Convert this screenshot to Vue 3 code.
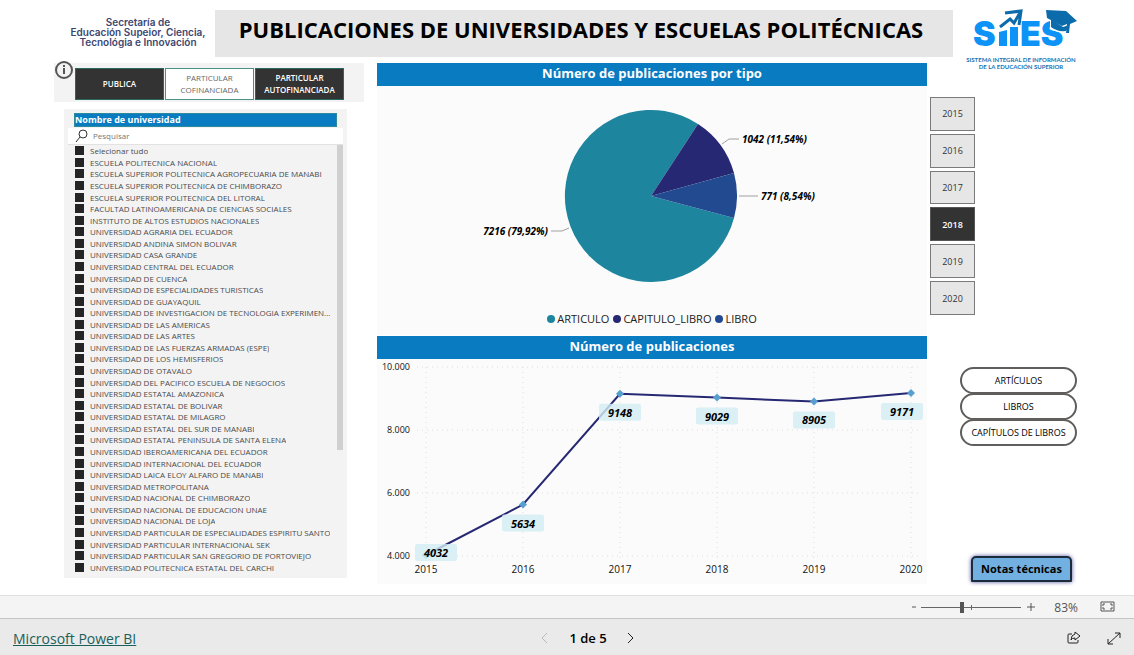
<script setup>
import { ref } from 'vue'

const sectors = ref([
  { label: 'PUBLICA', active: true },
  { label: 'PARTICULAR COFINANCIADA', active: false },
  { label: 'PARTICULAR AUTOFINANCIADA', active: true }
])

const universities = [
  'Selecionar tudo',
  'ESCUELA POLITECNICA NACIONAL',
  'ESCUELA SUPERIOR POLITECNICA AGROPECUARIA DE MANABI',
  'ESCUELA SUPERIOR POLITECNICA DE CHIMBORAZO',
  'ESCUELA SUPERIOR POLITECNICA DEL LITORAL',
  'FACULTAD LATINOAMERICANA DE CIENCIAS SOCIALES',
  'INSTITUTO DE ALTOS ESTUDIOS NACIONALES',
  'UNIVERSIDAD AGRARIA DEL ECUADOR',
  'UNIVERSIDAD ANDINA SIMON BOLIVAR',
  'UNIVERSIDAD CASA GRANDE',
  'UNIVERSIDAD CENTRAL DEL ECUADOR',
  'UNIVERSIDAD DE CUENCA',
  'UNIVERSIDAD DE ESPECIALIDADES TURISTICAS',
  'UNIVERSIDAD DE GUAYAQUIL',
  'UNIVERSIDAD DE INVESTIGACION DE TECNOLOGIA EXPERIMEN...',
  'UNIVERSIDAD DE LAS AMERICAS',
  'UNIVERSIDAD DE LAS ARTES',
  'UNIVERSIDAD DE LAS FUERZAS ARMADAS (ESPE)',
  'UNIVERSIDAD DE LOS HEMISFERIOS',
  'UNIVERSIDAD DE OTAVALO',
  'UNIVERSIDAD DEL PACIFICO ESCUELA DE NEGOCIOS',
  'UNIVERSIDAD ESTATAL AMAZONICA',
  'UNIVERSIDAD ESTATAL DE BOLIVAR',
  'UNIVERSIDAD ESTATAL DE MILAGRO',
  'UNIVERSIDAD ESTATAL DEL SUR DE MANABI',
  'UNIVERSIDAD ESTATAL PENINSULA DE SANTA ELENA',
  'UNIVERSIDAD IBEROAMERICANA DEL ECUADOR',
  'UNIVERSIDAD INTERNACIONAL DEL ECUADOR',
  'UNIVERSIDAD LAICA ELOY ALFARO DE MANABI',
  'UNIVERSIDAD METROPOLITANA',
  'UNIVERSIDAD NACIONAL DE CHIMBORAZO',
  'UNIVERSIDAD NACIONAL DE EDUCACION UNAE',
  'UNIVERSIDAD NACIONAL DE LOJA',
  'UNIVERSIDAD PARTICULAR DE ESPECIALIDADES ESPIRITU SANTO',
  'UNIVERSIDAD PARTICULAR INTERNACIONAL SEK',
  'UNIVERSIDAD PARTICULAR SAN GREGORIO DE PORTOVIEJO',
  'UNIVERSIDAD POLITECNICA ESTATAL DEL CARCHI'
]
const checked = ref(universities.map(() => true))

const years = [2015, 2016, 2017, 2018, 2019, 2020]
const year = ref(2018)
const zoom = ref(83)

const yOf = (v) => 556 - ((v - 4000) * 189) / 6000
const points = [4032, 5634, 9148, 9029, 8905, 9171].map((value, i) => ({
  value,
  year: 2015 + i,
  x: 426 + i * 97,
  y: yOf(value),
  lx: [436, 523, 620, 717, 814, 902][i],
  ly: value === 4032 ? 552 : yOf(value) + 18
}))
const line = points.map((p) => `${p.x},${p.y}`).join(' ')
const ticks = [
  { y: 367, label: '10.000' },
  { y: 430, label: '8.000' },
  { y: 493, label: '6.000' },
  { y: 556, label: '4.000' }
]
const legend = [
  { label: 'ARTICULO', kind: 'teal' },
  { label: 'CAPITULO_LIBRO', kind: 'navy' },
  { label: 'LIBRO', kind: 'blue' }
]
</script>

<template>
  <div class="app">
    <main class="report">
      <header class="top">
        <p class="agency">Secretaría de<br />Educación Supeior, Ciencia,<br />Tecnológia e Innovación</p>
        <h1>PUBLICACIONES DE UNIVERSIDADES Y ESCUELAS POLITÉCNICAS</h1>
        <svg class="logo" viewBox="953 0 181 76" role="img" aria-label="SIIES">
          <text class="mark" x="973" y="46">S</text>
          <path class="bar" d="M999 32l8-2v16h-8zM1010 27h8v19h-8z" />
          <text class="mark" x="1020" y="46">ES</text>
          <path class="arrow-line" d="M1000 27l10-8 4 4 7-12M1005 13l16-2-2 14" />
          <path class="cap-gap" d="M1050 16v12q8 6 18 4l3-13z" />
          <path class="cap" d="M1046 10l20 1 11 10-7 3-1 9-3 0 1-9-5 2-15-8z" />
          <path class="cap" d="M1051 19l12 8 6-2-3 6q-9 1-15-4z" />
          <text class="tag" x="1021" y="62">SISTEMA INTEGRAL DE INFORMACIÓN</text>
          <text class="tag" x="1021" y="69">DE LA EDUCACIÓN SUPERIOR</text>
        </svg>
      </header>

      <div class="body">
        <section class="left">
          <div class="sectors">
            <svg class="info" viewBox="0 0 20 20" aria-hidden="true">
              <circle cx="10" cy="10" r="8" />
              <path d="M10 5v2M10 8v6" />
            </svg>
            <button
              v-for="s in sectors"
              :key="s.label"
              type="button"
              :class="{ active: s.active }"
              :aria-pressed="s.active"
              @click="s.active = !s.active"
            >{{ s.label }}</button>
          </div>

          <div class="slicer">
            <h2>Nombre de universidad</h2>
            <label class="search">
              <svg viewBox="0 0 14 14" aria-hidden="true">
                <circle cx="8" cy="5" r="4" />
                <path d="M5 8l-4 5" />
              </svg>
              <input type="text" placeholder="Pesquisar" aria-label="Pesquisar" />
            </label>
            <ul>
              <li v-for="(u, i) in universities" :key="u">
                <label><input v-model="checked[i]" type="checkbox" /><span>{{ u }}</span></label>
              </li>
            </ul>
            <div class="scroll"></div>
          </div>
        </section>

        <section class="charts">
          <article class="card">
            <h2>Número de publicaciones por tipo</h2>
            <svg class="plot" viewBox="377 86 550 222" role="img" aria-label="Publicaciones por tipo">
              <path class="teal" d="M651 196L734 218A86 86 0 1 1 698 124Z" />
              <path class="navy" d="M651 196L698 124A86 86 0 0 1 734 173Z" />
              <path class="blue" d="M651 196L734 173A86 86 0 0 1 734 218Z" />
              <path class="lead" d="M722 144l7-5h10M739 196h19M551 231h11l7-3" />
              <text class="val" x="742" y="143">1042 (11,54%)</text>
              <text class="val" x="761" y="200">771 (8,54%)</text>
              <text class="val end" x="548" y="235">7216 (79,92%)</text>
            </svg>
            <div class="legend">
              <span v-for="l in legend" :key="l.label"><i :class="l.kind"></i>{{ l.label }}</span>
            </div>
          </article>

          <article class="card">
            <h2>Número de publicaciones</h2>
            <svg class="plot" viewBox="377 359 550 225" role="img" aria-label="Publicaciones por año">
              <g v-for="t in ticks" :key="t.label">
                <path class="grid" :d="`M417 ${t.y}H920`" />
                <text class="axis tick end" x="410" :y="t.y + 3">{{ t.label }}</text>
              </g>
              <g v-for="p in points" :key="p.year">
                <path class="grid" :d="`M${p.x} 367V559`" />
                <text class="axis mid" :x="p.x" y="573">{{ p.year }}</text>
              </g>
              <polyline class="line" :points="line" />
              <g v-for="p in points" :key="p.value">
                <path class="dot" :d="`M${p.x} ${p.y - 4}l4 4l-4 4l-4-4z`" />
                <rect class="tip" :x="p.lx - 21" :y="p.ly - 8" width="42" height="17" rx="2" />
                <text class="val big mid" :x="p.lx" :y="p.ly + 5">{{ p.value }}</text>
              </g>
            </svg>
          </article>
        </section>

        <aside class="right">
          <div class="years">
            <button
              v-for="y in years"
              :key="y"
              type="button"
              :class="{ active: y === year }"
              :aria-pressed="y === year"
              @click="year = y"
            >{{ y }}</button>
          </div>
          <nav class="pills">
            <button type="button">ARTÍCULOS</button>
            <button type="button">LIBROS</button>
            <button type="button">CAPÍTULOS DE LIBROS</button>
          </nav>
          <button type="button" class="notes">Notas técnicas</button>
        </aside>
      </div>
    </main>

    <div class="zoombar">
      <button type="button" aria-label="Reducir"><svg viewBox="0 0 10 10"><path d="M3 5h4" /></svg></button>
      <div class="range">
        <input v-model="zoom" type="range" min="10" max="190" aria-label="Zoom" />
        <i></i>
      </div>
      <button type="button" aria-label="Ampliar"><svg viewBox="0 0 10 10"><path d="M1 5h8M5 1v8" /></svg></button>
      <output>{{ zoom }}%</output>
      <button type="button" class="fit" aria-label="Ajustar a la página">
        <svg viewBox="0 0 16 12"><path d="M1 1h13v9H1zM3 5V3h2M10 3h2v2M12 6v2h-2M5 8H3V6" /></svg>
      </button>
    </div>

    <footer class="foot">
      <a href="#">Microsoft Power BI</a>
      <div class="pager">
        <button type="button" disabled aria-label="Anterior"><svg viewBox="0 0 8 12"><path d="M6 1L1 6l5 5" /></svg></button>
        <span>1 de 5</span>
        <button type="button" aria-label="Siguiente"><svg viewBox="0 0 8 12"><path d="M1 1l5 5-5 5" /></svg></button>
      </div>
      <div class="actions">
        <button type="button" aria-label="Compartir">
          <svg viewBox="0 0 14 14"><path d="M5 3H2Q1 3 1 4v7q0 1 1 1h8q1 0 1-1V9M8 1l5 4-5 4V7Q5 7 4 9q0-5 4-6z" /></svg>
        </button>
        <button type="button" aria-label="Pantalla completa">
          <svg viewBox="0 0 14 14"><path d="M1 13L13 2M8 2h5v5M1 8v5h5" /></svg>
        </button>
      </div>
    </footer>
  </div>
</template>

<style>
body { margin: 0; background: #fff; }
</style>

<style scoped>
* { box-sizing: border-box; }
.app {
  display: flex;
  flex-direction: column;
  min-height: 100vh;
  font-family: "Open Sans", "Noto Sans", sans-serif;
  color: #000;
}
button { font: inherit; color: inherit; padding: 0; margin: 0; cursor: pointer; }
h1, h2, p, ul { margin: 0; padding: 0; }
svg { display: block; }

.report { flex: 1; display: flex; flex-direction: column; padding: 10px 0 11px 54px; }
.top { display: flex; height: 47px; }
.agency {
  width: 161px;
  padding: 7px 0 0 7px;
  font: 600 10px/10px Inter, sans-serif;
  color: #3c4670;
  text-align: center;
  white-space: nowrap;
}
h1 {
  flex: 1;
  background: #e6e6e6;
  padding-right: 6px;
  font-size: 22px;
  line-height: 38px;
  font-weight: 700;
  text-align: center;
  white-space: nowrap;
}
.logo { width: 181px; height: 76px; margin-top: -10px; }
.mark { font: 900 34px Inter, sans-serif; fill: #0d92f6; }
.bar { fill: #0d92f6; }
.arrow-line { fill: none; stroke: #0b6bab; stroke-width: 3; }
.cap { fill: #0b6bab; }
.cap-gap { fill: #fff; }
.tag { font: 700 6px Lato, sans-serif; fill: #1574b5; text-anchor: middle; }

.body { flex: 1; display: grid; grid-template-columns: 310px 1fr 207px; padding-top: 6px; }
.left { display: flex; flex-direction: column; }
.sectors {
  position: relative;
  display: grid;
  grid-template-columns: repeat(3, 1fr);
  gap: 1px;
  height: 39px;
  padding: 5px 20px 2px 21px;
  background: #f3f3f3;
}
.sectors button {
  background: #fff;
  border: 1px solid #4a9186;
  color: #666;
  font-size: 8px;
  line-height: 12px;
  font-weight: 400;
}
.sectors button.active { background: #333; border-color: #28685f; color: #fff; font-weight: 600; }
.info { position: absolute; left: 0; top: -3px; width: 20px; height: 20px; fill: none; stroke: #555; stroke-width: 2; }

.slicer {
  position: relative;
  flex: 1;
  display: flex;
  flex-direction: column;
  margin: 7px 17px 6px 10px;
  padding: 4px 0 5px;
  background: #f3f3f3;
}
.slicer h2 {
  margin: 0 10px 1px;
  height: 14px;
  background: #087bc1;
  border: 1px solid #2c8a9c;
  color: #fff;
  font-size: 9px;
  line-height: 12px;
}
.search { display: flex; align-items: center; gap: 4px; height: 17px; margin: 0 4px; padding-left: 7px; background: #fff; border-bottom: 1px solid #e2e2e2; }
.search svg { width: 14px; height: 14px; fill: none; stroke: #333; }
.search input { flex: 1; min-width: 0; border: 0; padding: 0; background: none; font: 8px/12px "Open Sans", sans-serif; outline: none; }
.search input::placeholder { color: #777; opacity: 1; }
.slicer ul { flex: 1; display: grid; grid-template-columns: minmax(0, 1fr); grid-auto-rows: 1fr; list-style: none; padding: 0 6px 0 11px; }
.slicer li { min-height: 0; min-width: 0; display: flex; align-items: center; }
.slicer li label { display: flex; align-items: center; gap: 6px; min-width: 0; width: 100%; height: 11px; }
.slicer li input { appearance: none; flex: none; width: 9px; height: 9px; margin: 0; border: 1px solid #252525; background: #fff; }
.slicer li input:checked { background: #252525; }
.slicer li span { font-size: 8px; line-height: 11px; color: #4a4a4a; white-space: nowrap; overflow: hidden; text-overflow: ellipsis; }
.scroll { position: absolute; right: 4px; top: 36px; width: 6px; height: 65%; background: #d0d0d0; }

.charts { margin: 0 0 0 13px; display: flex; flex-direction: column; gap: 1px; }
.card { background: #fbfbfb; }
.card h2 { height: 23px; background: #087bc1; color: #fff; font-size: 13px; line-height: 21px; text-align: center; }
.plot { width: 100%; }
.teal { fill: #1d859d; background: #1d859d; }
.navy { fill: #262873; background: #262873; }
.blue { fill: #224a90; background: #224a90; }
.lead { fill: none; stroke: #a0a0a0; }
.val { font: italic 700 10px "Open Sans", sans-serif; fill: #000; }
.val.big { font-size: 11px; }
.end { text-anchor: end; }
.mid { text-anchor: middle; }
.legend { display: flex; justify-content: center; align-items: flex-start; gap: 4px; height: 27px; padding-top: 3px; font-size: 11px; line-height: 15px; color: #222; }
.legend span { display: flex; align-items: center; gap: 2px; }
.legend i { width: 8px; height: 8px; border-radius: 50%; }
.grid { fill: none; stroke: #dedede; stroke-dasharray: 1 4; }
.axis { font: 10px "Open Sans", sans-serif; fill: #111; }
.axis.tick { font-size: 9px; }
.line { fill: none; stroke: #262873; stroke-width: 2; }
.dot { fill: #579fd0; }
.tip { fill: #d3eef4; fill-opacity: .8; }

.right { display: flex; flex-direction: column; align-items: flex-start; padding: 34px 0 2px 3px; }
.years { display: grid; grid-auto-rows: 1fr; gap: 3px; width: 45px; height: 218px; }
.years button { background: #e6e6e6; border: 1px solid #7a7a7a; font-size: 9px; color: #333; }
.years button.active { background: #333; border-color: #555; color: #fff; font-weight: 600; }
.pills { display: flex; flex-direction: column; width: 117px; margin: 52px 0 0 30px; }
.pills button { height: 27px; margin-bottom: -1px; border: 2px solid #605e5c; border-radius: 14px; background: #fff; font-size: 9px; line-height: 20px; white-space: nowrap; }
.notes {
  width: 101px;
  height: 26px;
  margin: auto 0 0 41px;
  border: 2px solid #1c2b3c;
  border-radius: 5px 5px 1px 1px;
  background: #72b0e2;
  box-shadow: 0 0 4px #5050a0;
  font-size: 11px;
  line-height: 20px;
  font-weight: 700;
  white-space: nowrap;
}

.zoombar { display: flex; align-items: center; height: 23px; padding-right: 18px; justify-content: flex-end; background: #f4f4f4; border-top: 1px solid #e0e0e0; color: #555; font-size: 12px; }
.zoombar button, .foot button { background: none; border: 0; }
.zoombar svg { width: 10px; height: 10px; fill: none; stroke: #555; }
.zoombar .fit { margin-left: 22px; }
.zoombar .fit svg { width: 16px; height: 12px; }
.zoombar output { margin-left: 18px; }
.range { position: relative; width: 100px; height: 12px; margin: 0 5px 0 2px; }
.range input { appearance: none; display: block; width: 100%; height: 12px; margin: 0; background: linear-gradient(#666, #666) center / 100% 1px no-repeat; }
.range input::-webkit-slider-thumb { appearance: none; width: 4px; height: 11px; background: #555; }
.range i { position: absolute; left: 50px; top: 4px; width: 1px; height: 5px; background: #666; }

.foot { display: grid; grid-template-columns: 1fr auto 1fr; align-items: center; height: 37px; padding: 2px 13px 0; background: #eaeaea; border-top: 1px solid #c6c6c6; font-size: 13px; }
.foot a { color: #19605a; font-size: 14px; }
.foot svg { fill: none; stroke: #222; }
.pager { display: flex; align-items: center; gap: 20px; margin-left: 42px; font-weight: 600; }
.pager svg { width: 8px; height: 12px; }
.pager button:disabled svg { stroke: #bbb; }
.actions { display: flex; justify-content: flex-end; gap: 26px; }
.actions svg { width: 14px; height: 14px; }
</style>
